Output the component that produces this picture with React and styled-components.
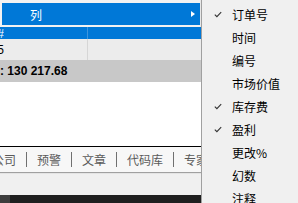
import React from "react";
import styled, { createGlobalStyle } from "styled-components";

const Global = createGlobalStyle`
  html, body { margin: 0; padding: 0; background: #ffffff; }
  body { font-family: "Noto Sans CJK SC", "Noto Sans", sans-serif; }
`;

const Page = styled.div`
  position: relative;
  width: 298px;
  height: 203px;
  overflow: hidden;
  display: flex;
  flex-direction: column;
  background: #ffffff;
`;

const TopStrip = styled.div`
  height: 27px;
  background: #f0f0f0;
`;

const Row = styled.div`
  display: grid;
  grid-template-columns: 4px 84px 1fr;
  height: ${(p) => p.h}px;
  background: ${(p) => p.bg};
  color: ${(p) => p.color || "#000"};
  font-family: "Liberation Sans", Arial, sans-serif;
  font-size: 12px;
  font-weight: ${(p) => (p.bold ? 700 : 400)};
`;

const Cell = styled.div`
  display: flex;
  align-items: ${(p) => p.align || "center"};
  justify-content: ${(p) => (p.clip ? "flex-end" : "flex-start")};
  overflow: hidden;
  white-space: nowrap;
  border-right: ${(p) => (p.line ? `1px solid ${p.line}` : "none")};
`;

const TotalText = styled.div`
  display: flex;
  align-items: center;
  height: 22px;
  padding-left: 0;
  background: #c8c8c8;
  font-family: "Liberation Sans", Arial, sans-serif;
  font-size: 12px;
  font-weight: 700;
  color: #000;
  white-space: nowrap;
`;

const Blank = styled.div`
  height: 64px;
  background: #ffffff;
`;

const Tabs = styled.div`
  display: flex;
  align-items: center;
  gap: 10px;
  height: 25px;
  border-top: 1px solid #000;
  border-bottom: 1px solid #a0a0a0;
  background: #f7f7f7;
  margin-left: -8px;
  font-size: 12px;
  color: #5a5a5a;
  white-space: nowrap;
`;

const Sep = styled.span`
  width: 1px;
  height: 15px;
  background: #707070;
`;

const Status = styled.div`
  height: 21px;
  border-top: 1px solid #e4e4e4;
  background: #f0f0f0;
`;

const Dark = styled.div`
  flex: 1;
  display: grid;
  grid-template-columns: 10px 1fr;
  div:first-child { background: #3d3d3d; }
  div:last-child { background: #1f1f1f; }
`;

const Menu = styled.div`
  position: absolute;
  left: 0;
  top: 0;
  width: 198px;
  padding: 3px 0 2px 2px;
  background: #f2f2f2;
  border-right: 1px solid #e8e8e8;
`;

const MenuItem = styled.div`
  display: flex;
  align-items: center;
  justify-content: space-between;
  height: 22px;
  padding: 0 5px 0 28px;
  background: ${(p) => (p.active ? "#0078d7" : "transparent")};
  color: ${(p) => (p.active ? "#ffffff" : "#000")};
  font-size: 12px;
`;

const Arrow = styled.span`
  width: 0;
  height: 0;
  border-top: 3.5px solid transparent;
  border-bottom: 3.5px solid transparent;
  border-left: 4px solid #ffffff;
`;

const SubMenu = styled.div`
  position: absolute;
  left: 201px;
  top: -1px;
  width: 110px;
  padding-top: 3px;
  border: 1px solid #a0a0a0;
  background: #f0f0f0;
`;

const SubItem = styled.div`
  display: flex;
  align-items: center;
  height: 23px;
  font-size: 12px;
  color: #000;
`;

const CheckBox = styled.span`
  display: flex;
  justify-content: center;
  width: 30px;
  padding-left: 1px;
  box-sizing: border-box;
`;

const Check = () => (
  <svg width="8" height="7" viewBox="0 0 8 7">
    <polyline points="0.8,3.6 2.9,5.7 7.2,1.2" fill="none" stroke="#333" strokeWidth="1.1" />
  </svg>
);

const columns = [
  { label: "订单号", on: true },
  { label: "时间" },
  { label: "编号" },
  { label: "市场价值" },
  { label: "库存费", on: true },
  { label: "盈利", on: true },
  { label: "更改%" },
  { label: "幻数" },
  { label: "注释" },
];

const tabs = ["公司", "预警", "文章", "代码库", "专家"];

export default function App() {
  return (
    <Page>
      <Global />
      <TopStrip />
      <Row h={12} bg="#0078d7" color="#fff">
        <Cell clip align="flex-start">#</Cell>
        <Cell line="#3d95dd" />
        <Cell />
      </Row>
      <Row h={21} bg="#ececec">
        <Cell clip>5</Cell>
        <Cell line="#d6d6d6" />
        <Cell />
      </Row>
      <TotalText>: 130 217.68</TotalText>
      <Blank />
      <Tabs>
        {tabs.map((t, i) => (
          <React.Fragment key={t}>
            {i > 0 && <Sep />}
            <span>{t}</span>
          </React.Fragment>
        ))}
      </Tabs>
      <Status />
      <Dark>
        <div />
        <div />
      </Dark>

      <Menu>
        <MenuItem active>
          <span>列</span>
          <Arrow />
        </MenuItem>
      </Menu>

      <SubMenu>
        {columns.map((c) => (
          <SubItem key={c.label}>
            <CheckBox>{c.on && <Check />}</CheckBox>
            <span>{c.label}</span>
          </SubItem>
        ))}
      </SubMenu>
    </Page>
  );
}
